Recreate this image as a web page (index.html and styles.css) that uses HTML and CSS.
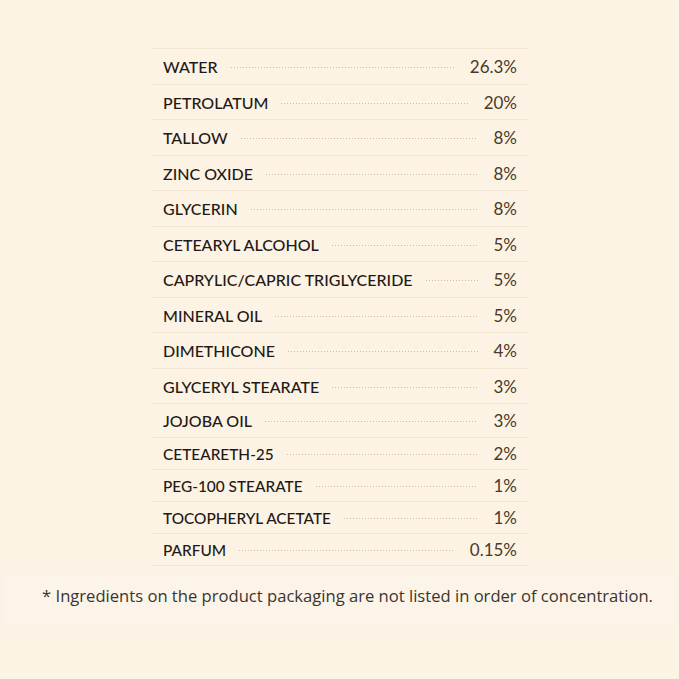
FILE: index.html
```html
<!DOCTYPE html>
<html>
<head>
<meta charset="utf-8">
<link rel="stylesheet" href="styles.css">
</head>
<body>
<div class="table">
  <div class="row"><span class="name">WATER</span><span class="dots"></span><span class="pct">26.3%</span></div>
  <div class="row"><span class="name">PETROLATUM</span><span class="dots"></span><span class="pct">20%</span></div>
  <div class="row"><span class="name">TALLOW</span><span class="dots"></span><span class="pct">8%</span></div>
  <div class="row"><span class="name">ZINC OXIDE</span><span class="dots"></span><span class="pct">8%</span></div>
  <div class="row"><span class="name">GLYCERIN</span><span class="dots"></span><span class="pct">8%</span></div>
  <div class="row"><span class="name">CETEARYL ALCOHOL</span><span class="dots"></span><span class="pct">5%</span></div>
  <div class="row"><span class="name">CAPRYLIC/CAPRIC TRIGLYCERIDE</span><span class="dots"></span><span class="pct">5%</span></div>
  <div class="row"><span class="name">MINERAL OIL</span><span class="dots"></span><span class="pct">5%</span></div>
  <div class="row"><span class="name">DIMETHICONE</span><span class="dots"></span><span class="pct">4%</span></div>
  <div class="row"><span class="name">GLYCERYL STEARATE</span><span class="dots"></span><span class="pct">3%</span></div>
  <div class="row mid"><span class="name">JOJOBA OIL</span><span class="dots"></span><span class="pct">3%</span></div>
  <div class="row small"><span class="name">CETEARETH-25</span><span class="dots"></span><span class="pct">2%</span></div>
  <div class="row small"><span class="name">PEG-100 STEARATE</span><span class="dots"></span><span class="pct">1%</span></div>
  <div class="row small"><span class="name">TOCOPHERYL ACETATE</span><span class="dots"></span><span class="pct">1%</span></div>
  <div class="row small"><span class="name">PARFUM</span><span class="dots"></span><span class="pct">0.15%</span></div>
</div>
<div class="note">
  <p>* Ingredients on the product packaging are not listed in order of concentration.</p>
</div>
</body>
</html>
```

FILE: styles.css
```css
html, body {
  margin: 0;
  padding: 0;
  background: #fdf3e5;
}
body {
  padding-top: 48px;
  font-family: "Lato", "Open Sans", sans-serif;
}
.table {
  width: 377px;
  margin: 0 auto;
  border-top: 1px solid #f1e5d4;
}
.row {
  display: flex;
  align-items: center;
  height: 35.5px;
  box-sizing: border-box;
  border-bottom: 1px solid #f1e5d4;
  padding: 1px 11px 0 12px;
}
.row.mid { height: 33.5px; }
.row.small { height: 32px; }
.name {
  font-size: 16px;
  font-weight: 500;
  color: #1f1a15;
  white-space: nowrap;
}
.row.small .name { font-size: 15.4px; }
.dots {
  flex: 1;
  height: 1px;
  margin: 2px 16px 0 13px;
  background-image: linear-gradient(to right, #cdbda8 1px, transparent 1px);
  background-size: 3px 1px;
  background-repeat: repeat-x;
}
.pct {
  font-size: 17px;
  color: #4a3a26;
  white-space: nowrap;
}
.note {
  margin-top: 5px;
  margin-left: 4px;
  height: 56px;
  box-sizing: border-box;
  padding: 0 0 6px 12px;
  background: #fcf4e9;
  display: flex;
  align-items: center;
  justify-content: center;
}
.note p {
  margin: 0;
  font-family: "Open Sans", "Noto Sans", sans-serif;
  font-size: 16.6px;
  color: #3a3530;
}
```
